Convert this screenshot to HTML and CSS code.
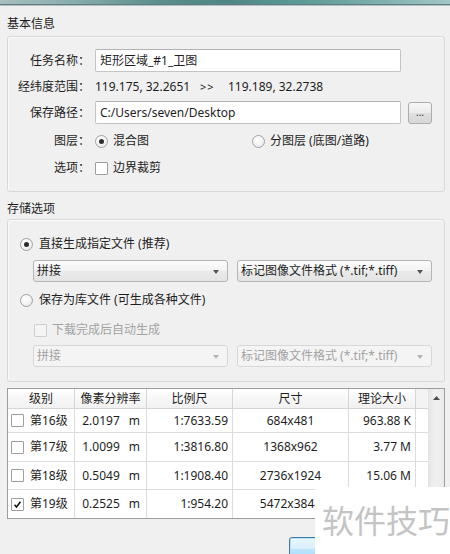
FILE: index.html
```html
<!DOCTYPE html>
<html lang="zh-CN">
<head>
<meta charset="utf-8">
<title>下载任务</title>
<link rel="stylesheet" href="styles.css">
</head>
<body>
<div class="titlebar"></div>
<main class="dialog">
  <div class="section-title">基本信息</div>
  <section class="group basic">
    <div class="row r-name">
      <span class="lbl">任务名称：</span>
      <span class="input">矩形区域_#1_卫图</span>
    </div>
    <div class="row r-range">
      <span class="lbl">经纬度范围：</span>
      <span class="coord">119.175, 32.2651</span>
      <span class="arrow">&gt;&gt;</span>
      <span>119.189, 32.2738</span>
    </div>
    <div class="row r-path">
      <span class="lbl">保存路径：</span>
      <span class="input">C:/Users/seven/Desktop</span>
      <span class="btn browse">...</span>
    </div>
    <div class="row r-layer">
      <span class="lbl">图层：</span>
      <span class="choice first"><span class="radio on"></span>混合图</span>
      <span class="choice"><span class="radio"></span>分图层 (底图/道路)</span>
    </div>
    <div class="row r-opt">
      <span class="lbl">选项：</span>
      <span class="choice"><span class="check"></span>边界裁剪</span>
    </div>
  </section>

  <div class="section-title second">存储选项</div>
  <section class="group store">
    <div class="opt-row"><span class="radio on"></span>直接生成指定文件 (推荐)</div>
    <div class="combo-row">
      <span class="combo">拼接<i class="caret"></i></span>
      <span class="combo">标记图像文件格式 (*.tif;*.tiff)<i class="caret"></i></span>
    </div>
    <div class="opt-row lib"><span class="radio"></span>保存为库文件 (可生成各种文件)</div>
    <div class="check-row disabled"><span class="check"></span>下载完成后自动生成</div>
    <div class="combo-row last disabled">
      <span class="combo">拼接<i class="caret"></i></span>
      <span class="combo">标记图像文件格式 (*.tif;*.tiff)<i class="caret"></i></span>
    </div>
  </section>

  <section class="levels">
    <div class="grid">
      <div class="tr head">
        <span class="th">级别</span>
        <span class="th">像素分辨率</span>
        <span class="th">比例尺</span>
        <span class="th">尺寸</span>
        <span class="th">理论大小</span>
        <span class="th fill"></span>
      </div>
      <div class="tr">
        <span class="td lv"><span class="check"></span>第16级</span>
        <span class="td res">2.0197<em>m</em></span>
        <span class="td num">1:7633.59</span>
        <span class="td mid">684x481</span>
        <span class="td num">963.88 K</span>
        <span class="td fill"></span>
      </div>
      <div class="tr">
        <span class="td lv"><span class="check"></span>第17级</span>
        <span class="td res">1.0099<em>m</em></span>
        <span class="td num">1:3816.80</span>
        <span class="td mid">1368x962</span>
        <span class="td num">3.77 M</span>
        <span class="td fill"></span>
      </div>
      <div class="tr">
        <span class="td lv"><span class="check"></span>第18级</span>
        <span class="td res">0.5049<em>m</em></span>
        <span class="td num">1:1908.40</span>
        <span class="td mid">2736x1924</span>
        <span class="td num">15.06 M</span>
        <span class="td fill"></span>
      </div>
      <div class="tr">
        <span class="td lv"><span class="check on"><svg viewBox="0 0 13 13" width="13" height="13"><path d="M3 6.8 L5.3 9.4 L10 3.2" fill="none" stroke="#111" stroke-width="1.8"/></svg></span>第19级</span>
        <span class="td res">0.2525<em>m</em></span>
        <span class="td num">1:954.20</span>
        <span class="td mid">5472x3848</span>
        <span class="td num">60.24 M</span>
        <span class="td fill"></span>
      </div>
    </div>
    <div class="vscroll">
      <span class="up"><svg viewBox="0 0 7 4" width="7" height="4"><path d="M0 4 L3.5 0 L7 4 Z" fill="#4d4d4d"/></svg></span>
    </div>
  </section>

  <div class="actions">
    <span class="btn push default">确定</span>
    <span class="btn push">取消</span>
  </div>
</main>
<div class="stamp">软件技巧</div>
</body>
</html>
```
FILE: styles.css
```css
html, body {
  margin: 0;
  padding: 0;
}
body {
  width: 450px;
  height: 554px;
  overflow: hidden;
  position: relative;
  background: #f0f0f0;
  color: #1e1e1e;
  font-family: "Noto Sans", "Noto Sans CJK SC", sans-serif;
  font-size: 12px;
  line-height: 16px;
}

/* window frame strip */
.titlebar {
  height: 4px;
  background: linear-gradient(90deg, #a6bfbf 0%, #8cafad 15%, #5b8f8d 35%, #4c8785 50%, #5e9b98 68%, #7fb1b0 85%, #a3c6c6 100%);
  border-bottom: 1px solid #5f7b7b;
  box-shadow: 0 1px 0 #b3c3c3;
}

.dialog {
  padding: 0 6px 0 7px;
}

.section-title {
  margin-top: 11px;
  height: 16px;
  padding-left: 0;
}
.section-title.second {
  margin-top: 9px;
}

.group {
  margin-top: 4px;
  width: 438px;
  box-sizing: border-box;
  border: 1px solid #d8d8d8;
  border-radius: 3px;
  box-shadow: inset 1px 1px 0 #fbfbfb;
}
.group.second {
  margin-top: 2px;
}

/* basic info */
.basic {
  padding: 12px 0 13px 0;
}
.row {
  display: flex;
  align-items: center;
}
.r-name, .r-path { height: 23px; }
.r-range { height: 29px; }
.r-layer { height: 34px; }
.r-opt { height: 20px; }

.lbl {
  width: 82px;
  margin-right: 5px;
  text-align: right;
  flex: none;
}
.input {
  width: 306px;
  height: 23px;
  box-sizing: border-box;
  border: 1px solid #c4c4c4;
  border-top-color: #b3b3b3;
  border-radius: 2px;
  background: #fff;
  padding: 0 4px;
  line-height: 21px;
}
.coord { width: 105px; }
.arrow { width: 28px; font-size: 11px; letter-spacing: 1px; }

.btn {
  box-sizing: border-box;
  border: 1px solid #adadad;
  border-radius: 3px;
  background: linear-gradient(#f6f6f6, #ececec 50%, #dfdfdf 51%, #d8d8d8);
  text-align: center;
}
.browse {
  width: 24px;
  height: 22px;
  margin-left: 7px;
  line-height: 18px;
  font-size: 10px;
  color: #333;
}

.choice {
  display: flex;
  align-items: center;
  gap: 5px;
}
.choice.first { width: 157px; }

.radio {
  width: 13px;
  height: 13px;
  box-sizing: border-box;
  border-radius: 50%;
  border: 1px solid #a2a2a2;
  background: radial-gradient(circle at 40% 35%, #ffffff 0%, #f2f2f2 55%, #dcdcdc 100%);
  display: inline-flex;
  align-items: center;
  justify-content: center;
  flex: none;
}
.radio.on::after {
  content: "";
  width: 5px;
  height: 5px;
  border-radius: 50%;
  background: #2b2b2b;
}
.check {
  width: 13px;
  height: 13px;
  box-sizing: border-box;
  border: 1px solid #9e9e9e;
  border-radius: 1px;
  background: #fff;
  display: inline-flex;
  align-items: center;
  justify-content: center;
  flex: none;
}
.check svg { display: block; }

/* storage options */
.second + .group { margin-top: 2px; }
.store {
  padding: 16px 0 14px 0;
}
.opt-row {
  height: 16px;
  padding-left: 12px;
  display: flex;
  align-items: center;
  gap: 6px;
}
.opt-row.lib { margin-top: 10px; }
.combo-row {
  margin-top: 8px;
  padding-left: 25px;
  display: flex;
  gap: 9px;
}
.combo-row.last { margin-top: 7px; }
.combo {
  position: relative;
  width: 195px;
  height: 22px;
  box-sizing: border-box;
  border: 1px solid #b5b5b5;
  border-radius: 3px;
  background: linear-gradient(#fbfbfb, #f3f3f3 50%, #eaeaea 51%, #e4e4e4);
  padding-left: 3px;
  line-height: 20px;
}
.caret {
  position: absolute;
  right: 8px;
  top: 9px;
  width: 0;
  height: 0;
  border-left: 3.5px solid transparent;
  border-right: 3.5px solid transparent;
  border-top: 4px solid #555;
}
.check-row {
  margin-top: 14px;
  height: 16px;
  padding-left: 26px;
  display: flex;
  align-items: center;
  gap: 5px;
}
.disabled { color: #a3a3a3; }
.disabled .check { border-color: #cfcfcf; background: #f4f4f4; }
.disabled .combo {
  border-color: #d7d7d7;
  background: #f4f4f4;
}
.disabled .caret { border-top-color: #b3b3b3; }

/* level list */
.levels {
  margin-top: 6px;
  width: 438px;
  box-sizing: border-box;
  border: 1px solid #9c9c9c;
  display: flex;
  background: #fff;
}
.grid { flex: none; }
.tr {
  display: grid;
  grid-template-columns: 67px 72px 86px 116px 67px 12px;
  height: 29px;
  box-sizing: border-box;
  border-bottom: 1px solid #dcdcdc;
}
.tr.head {
  height: 20px;
  border-bottom-color: #d5d5d5;
  background: linear-gradient(#ffffff, #f7f7f7 50%, #f1f1f1);
}
.tr:nth-child(2) { height: 24px; }
.tr:nth-child(4) { height: 28px; }
.tr:last-child { height: 28px; border-bottom: 0; }

.th, .td {
  box-sizing: border-box;
  border-right: 1px solid #dcdcdc;
  display: flex;
  align-items: center;
  white-space: nowrap;
  overflow: hidden;
}
.th {
  justify-content: center;
  border-right-color: #d5d5d5;
  line-height: 18px;
}
.th.fill { border-right: 0; background: #f3f3f3; }
.td.fill { border-right: 0; background: #fff; }
.lv {
  padding-left: 3px;
  gap: 6px;
}
.res {
  justify-content: flex-end;
  padding-right: 6px;
}
.res em {
  font-style: normal;
  margin-left: 9px;
}
.num {
  justify-content: flex-end;
  padding-right: 4px;
}
.mid { justify-content: center; }

.vscroll {
  width: 16px;
  flex: none;
  background: linear-gradient(90deg, #e6e6e6, #f0f0f0 40%, #ebebeb);
  border-left: 1px solid #e2e2e2;
  box-sizing: border-box;
}
.up {
  display: flex;
  height: 17px;
  align-items: center;
  justify-content: center;
}
.up svg { display: block; }

/* dialog buttons */
.actions {
  margin-top: 18px;
  width: 438px;
  display: flex;
  justify-content: flex-end;
  gap: 6px;
}
.push {
  width: 75px;
  height: 23px;
  line-height: 21px;
}
.push.default {
  border-color: #3d7bad;
  box-shadow: inset 0 0 0 1px #b6e2f8;
  background: linear-gradient(#eaf6fd, #d9f0fc 50%, #bee6fd 51%, #a7d9f5);
}

/* site stamp in the corner */
.stamp {
  position: absolute;
  left: 315px;
  top: 487px;
  width: 135px;
  height: 67px;
  box-sizing: border-box;
  background: #fff;
  padding: 16px 0 0 7px;
  font-family: "Noto Sans CJK SC", sans-serif;
  font-size: 32px;
  line-height: 32px;
  color: #c4c4c4;
  white-space: nowrap;
}
```
